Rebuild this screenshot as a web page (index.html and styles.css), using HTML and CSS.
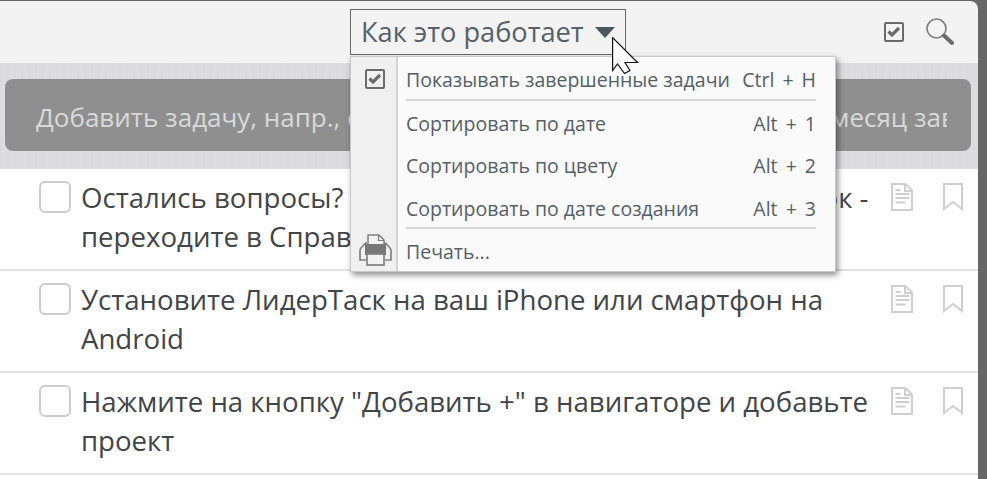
FILE: index.html
```html
<!DOCTYPE html>
<html lang="ru">
<head>
<meta charset="utf-8">
<title>Как это работает</title>
<link rel="stylesheet" href="styles.css">
</head>
<body>
<div class="window">
  <header class="topbar">
    <button class="title-btn">Как это работает<span class="caret"></span></button>
    <div class="top-icons">
      <svg class="ic-check" width="20" height="20" viewBox="0 0 20 20"><rect x="1" y="1" width="18" height="18" rx="1" fill="none" stroke="#6b6b6b" stroke-width="2"/><path d="M4.500 9.500l3.500 3.500L15 6" fill="none" stroke="#6b6b6b" stroke-width="3.200"/></svg>
      <svg class="ic-search" width="28" height="28" viewBox="0 0 28 28"><circle cx="10.500" cy="10.500" r="9.500" fill="none" stroke="#808080" stroke-width="1.700"/><path d="M18 17.500l8 7.500" stroke="#6b6b6b" stroke-width="4" stroke-linecap="round"/></svg>
    </div>
  </header>
  <section class="addband">
    <div class="addinput"><span class="placeholder">Добавить задачу, напр., составить отчёт в конце года каждый месяц завершать проект</span></div>
  </section>
  <ul class="tasks">
    <li class="task">
      <span class="box"></span>
      <span class="text">Остались вопросы? Посмотрите этот учебный видеоурок - переходите в Справку</span>
      <span class="icons">
        <svg class="doc" width="22" height="28" viewBox="0 0 22 28"><path d="M1 1h13.500L21 7.500V27H1z M14 1v7h7" fill="none" stroke="#cfcfcf" stroke-width="2"/><path d="M4.500 7h5M4.500 15h14M4.500 19.500h10M4.500 11h14" stroke="#cfcfcf" stroke-width="2"/></svg>
        <svg class="mark" width="20" height="28" viewBox="0 0 20 28"><path d="M1 1h18v25l-9-7-9 7z" fill="none" stroke="#cfcfcf" stroke-width="2"/></svg>
      </span>
    </li>
    <li class="task">
      <span class="box"></span>
      <span class="text">Установите ЛидерТаск на ваш iPhone или смартфон на Android</span>
      <span class="icons">
        <svg class="doc" width="22" height="28" viewBox="0 0 22 28"><path d="M1 1h13.500L21 7.500V27H1z M14 1v7h7" fill="none" stroke="#cfcfcf" stroke-width="2"/><path d="M4.500 7h5M4.500 15h14M4.500 19.500h10M4.500 11h14" stroke="#cfcfcf" stroke-width="2"/></svg>
        <svg class="mark" width="20" height="28" viewBox="0 0 20 28"><path d="M1 1h18v25l-9-7-9 7z" fill="none" stroke="#cfcfcf" stroke-width="2"/></svg>
      </span>
    </li>
    <li class="task">
      <span class="box"></span>
      <span class="text">Нажмите на кнопку "Добавить +" в навигаторе и добавьте проект</span>
      <span class="icons">
        <svg class="doc" width="22" height="28" viewBox="0 0 22 28"><path d="M1 1h13.500L21 7.500V27H1z M14 1v7h7" fill="none" stroke="#cfcfcf" stroke-width="2"/><path d="M4.500 7h5M4.500 15h14M4.500 19.500h10M4.500 11h14" stroke="#cfcfcf" stroke-width="2"/></svg>
        <svg class="mark" width="20" height="28" viewBox="0 0 20 28"><path d="M1 1h18v25l-9-7-9 7z" fill="none" stroke="#cfcfcf" stroke-width="2"/></svg>
      </span>
    </li>
  </ul>
</div>

<div class="menu">
  <div class="menu-rail">
    <svg class="rail-check" width="20" height="20" viewBox="0 0 20 20"><rect x="1" y="1" width="18" height="18" rx="1" fill="none" stroke="#6b6b6b" stroke-width="2"/><path d="M4.500 9.500l3.500 3.500L15 6" fill="none" stroke="#6b6b6b" stroke-width="3.200"/></svg>
    <svg class="rail-print" width="33" height="32" viewBox="0 0 33 32"><path d="M9 11V1h11l5 5v5" fill="#f2f2f2" stroke="#808080" stroke-width="1.500"/><path d="M19.500 1v5.500H25" fill="none" stroke="#808080" stroke-width="1.200"/><path d="M8 9H6.500L2 14q-1 1-1 3v9h6M25 9h1.500L31 14q1 1 1 3v9h-6" fill="none" stroke="#808080" stroke-width="1.700"/><rect x="6" y="10" width="21" height="11" fill="#777"/><rect x="8" y="20" width="17" height="11" fill="#f2f2f2" stroke="#808080" stroke-width="1.700"/></svg>
  </div>
  <div class="menu-items">
    <div class="mi first sep"><span>Показывать завершенные задачи</span><span class="key">Ctrl + H</span></div>
    <div class="mi second"><span>Сортировать по дате</span><span class="key">Alt + 1</span></div>
    <div class="mi"><span>Сортировать по цвету</span><span class="key">Alt + 2</span></div>
    <div class="mi fourth sep"><span>Сортировать по дате создания</span><span class="key">Alt + 3</span></div>
    <div class="mi last"><span>Печать...</span></div>
  </div>
</div>

<svg class="cursor" width="27" height="38" viewBox="0 0 27 38"><path d="M.6.600V33.500L5.500 27l7 9.500 5.500-3-5-8H25.500z" fill="#fff" stroke="#111" stroke-width="1.200"/></svg>
</body>
</html>
```
FILE: styles.css
```css
* { box-sizing: border-box; }
html, body { margin: 0; padding: 0; height: 100%; overflow: hidden; }
body {
  width: 990px; height: 479px; background: #fff;
  font-family: "Open Sans", "Noto Sans", sans-serif; color: #444;
}
.window {
  width: 987px; height: 479px; background: #666;
  padding: 1px 9px 0 0; overflow: hidden;
}
.topbar {
  height: 62px; background: #f3f3f3; border-top-right-radius: 8px;
  display: flex; align-items: flex-start;
  padding: 8px 0 0 350px;
}
.title-btn {
  width: 276px; height: 46px; border: 1px solid #6b6b6b; background: #f3f3f3;
  font: 27.200px/1 "Open Sans", sans-serif; color: #55606a; text-align: left;
  padding: 0 0 0 10px; display: flex; align-items: center; white-space: pre;
}
.caret {
  margin-left: 11px; width: 0; height: 0; margin-top: 1px;
  border-left: 10.500px solid transparent; border-right: 10.500px solid transparent;
  border-top: 11px solid #4d5560;
}
.top-icons { margin-left: auto; display: flex; align-items: flex-start; padding: 13px 24px 0 0; gap: 22px; }
.ic-search { margin-top: -4px; }
.addband {
  height: 106px; padding: 16px 7px 18px 5px;
  background-color: #dddddf;
  background-image: repeating-linear-gradient(90deg, rgba(0,0,0,.012) 0 2px, transparent 2px 7px);
}
.addinput {
  height: 72px; background: #8f8f90; border-radius: 8px;
  color: #d9d9d9; font-size: 26px; line-height: 68px;
  padding: 4px 24px 0 31px;
}
.placeholder { display: block; white-space: nowrap; overflow: hidden; }
.tasks { list-style: none; margin: 0; padding: 0; background: #fff; height: 311px; }
.task {
  height: 102px; background: #fff; border-bottom: 2px solid #e2e2e2;
  display: flex; align-items: flex-start; padding: 12px 0 0 39px;
}
.box { width: 32px; height: 32px; border: 2px solid #cdcdcd; border-radius: 6px; flex: none; margin-right: 10px; }
.text { width: 790px; font-size: 27.600px; line-height: 39px; color: #3f4549; margin-top: -3px; flex: none; }
.icons { display: flex; gap: 30px; margin-left: 20px; padding-top: 2px; }
.menu {
  position: absolute; left: 350px; top: 56px; width: 486px; height: 216px;
  background: #fafafa; border: 1px solid #c8c8c8;
  box-shadow: 2px 3px 6px rgba(0,0,0,.45); display: flex;
}
.menu-rail {
  width: 47px; background: #f0f0f0; border-right: 2px solid #d4d4d4; flex: none;
  position: relative;
}
.rail-check { position: absolute; left: 14px; top: 12px; }
.rail-print { position: absolute; left: 8px; top: 177px; }
.menu-items { flex: 1; padding: 0 19px 0 8px; }
.mi {
  height: 42px; display: flex; justify-content: space-between; align-items: center;
  font-size: 19.500px; color: #555f68;
}
.key { word-spacing: 3px; }
.mi.sep { border-bottom: 2px solid #d6d6d6; }
.mi.first { height: 44px; padding-top: 3px; }
.mi.second { margin-top: 1px; }
.mi.fourth { height: 43px; padding-top: 3px; }
.mi.last { height: 42px; padding-top: 3px; }
.cursor { position: absolute; left: 612px; top: 37px; }
```
